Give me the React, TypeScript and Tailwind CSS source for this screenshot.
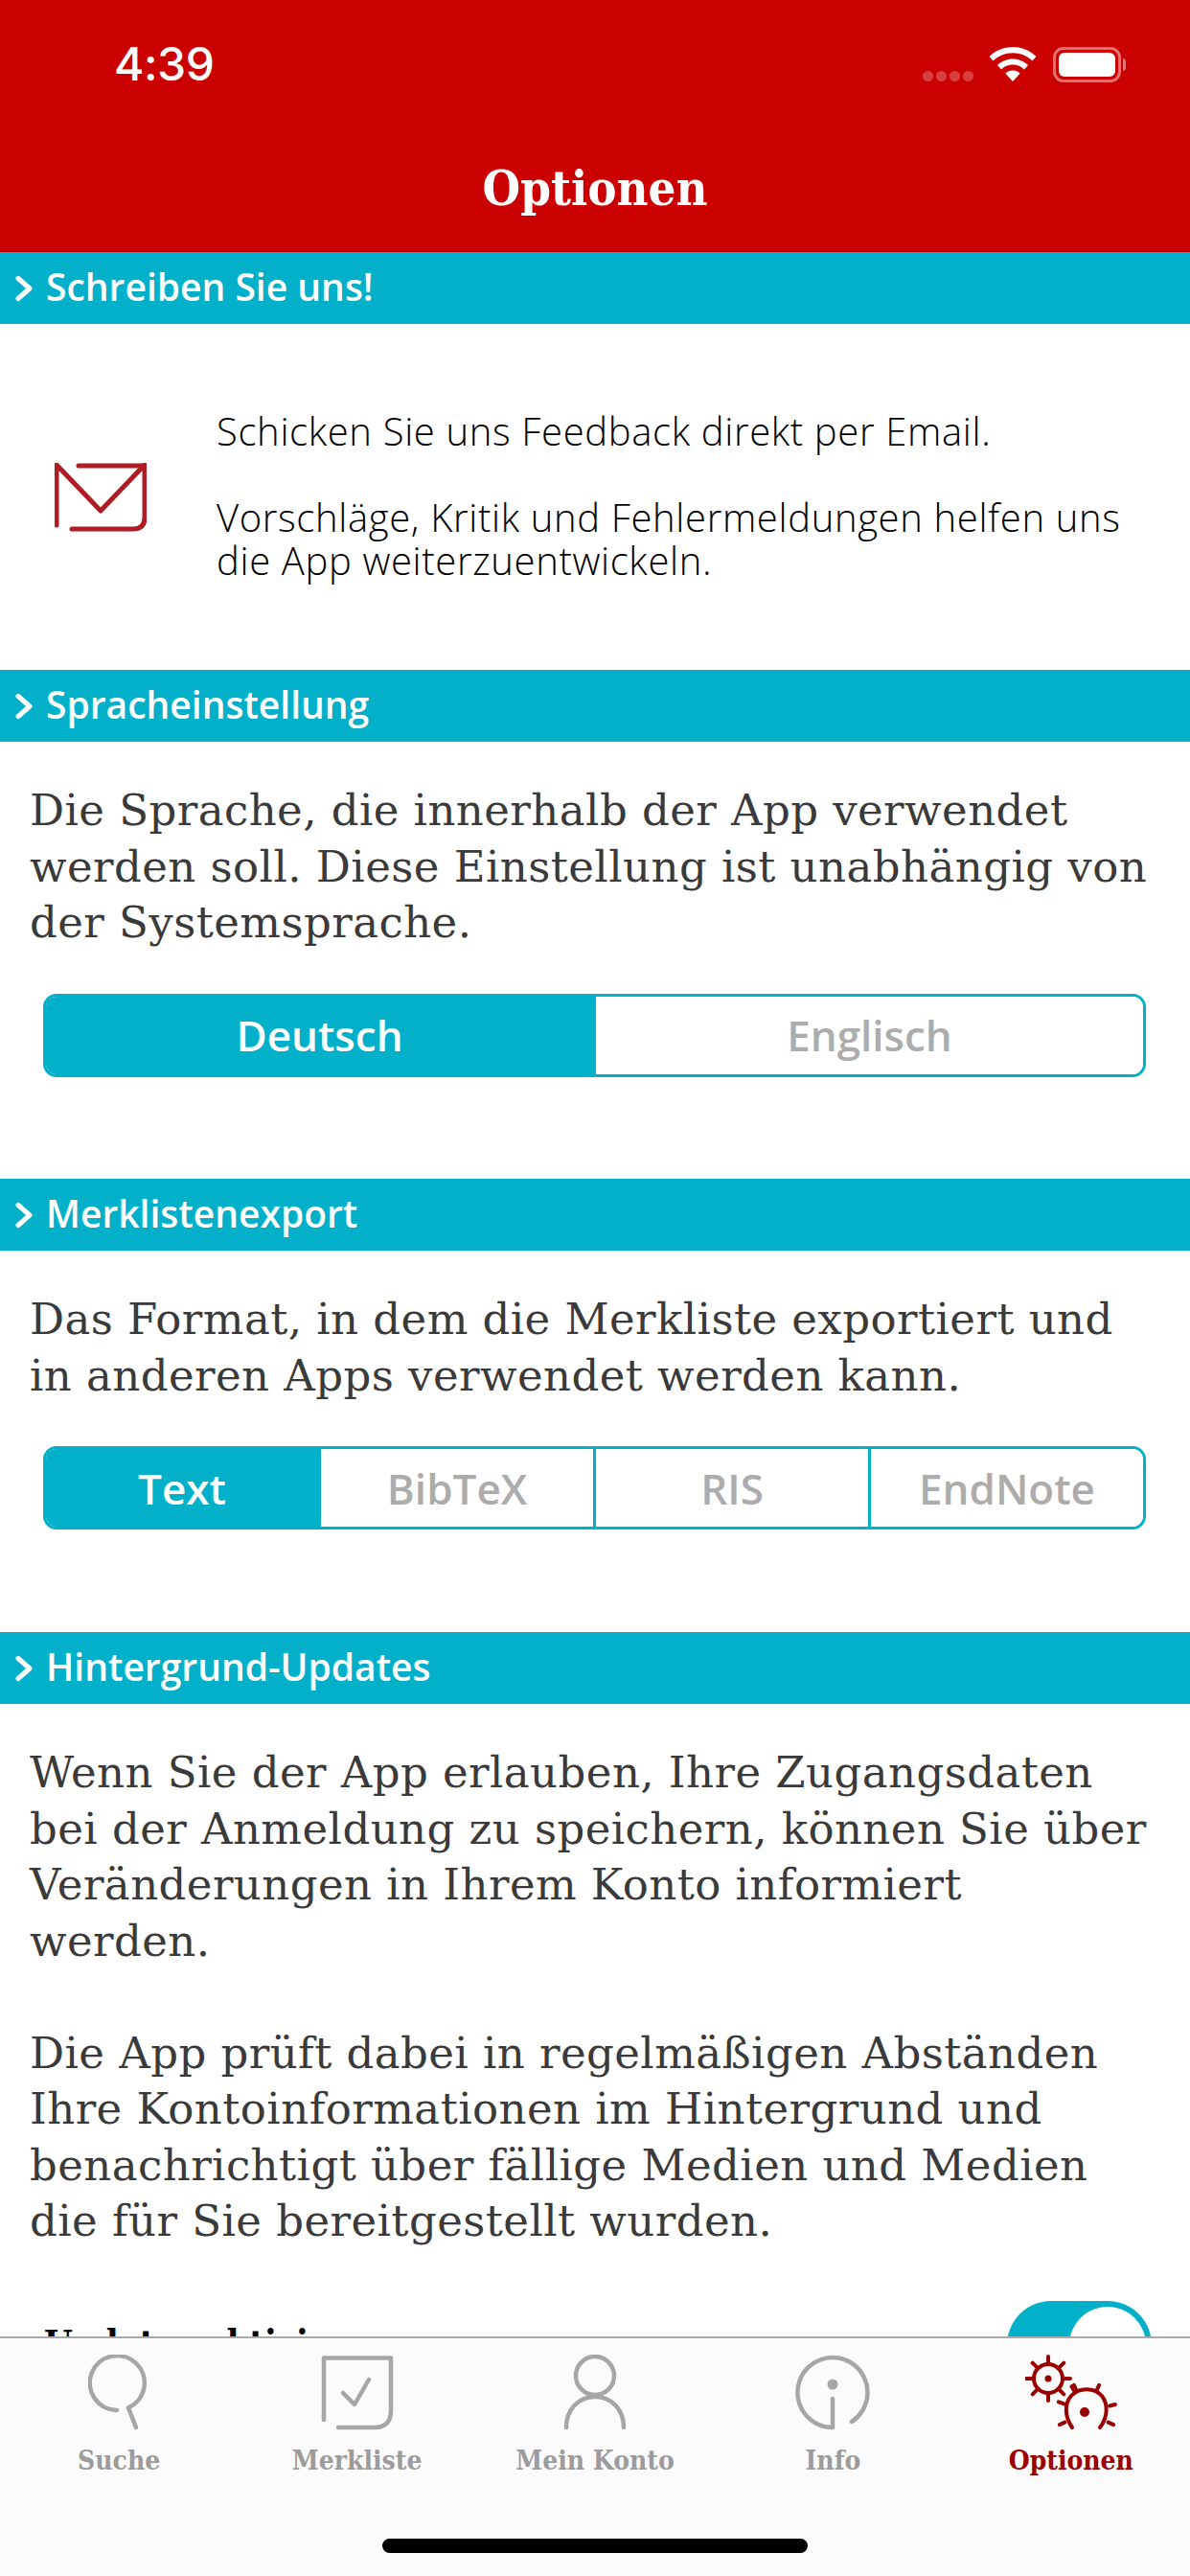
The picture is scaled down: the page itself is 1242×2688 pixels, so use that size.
const slab = "font-['DejaVu_Serif_Condensed','DejaVu_Serif',serif]";

function Chevron() {
  return (
    <svg width="18" height="28" viewBox="0 0 18 28" className="shrink-0" fill="none" stroke="#fff" strokeWidth="5" strokeLinecap="round" strokeLinejoin="round">
      <path d="M3 3.500 L15 14 L3 24.500" />
    </svg>
  );
}

function SectionBar({ title }: { title: string }) {
  return (
    <div className="h-[75px] bg-[#02b0ca] flex items-center pl-[16px] gap-[14px] shrink-0">
      <Chevron />
      <span className="font-['Open_Sans',sans-serif] font-semibold text-[39px] leading-none text-white mt-[-4px]">{title}</span>
    </div>
  );
}

function Body({ lines }: { lines: string[] }) {
  return (
    <div className="font-['DejaVu_Serif',serif] text-[45px] tracking-[0.45px] leading-[58.5px] text-[#3a3a3a] pl-[31px] whitespace-nowrap">
      {lines.map((l, i) => (
        <div key={i} className="h-[58.5px]">{l || " "}</div>
      ))}
    </div>
  );
}

function Segments({ items, active }: { items: string[]; active: number }) {
  return (
    <div className="ml-[45px] mr-[46px] h-[87px] border-[3px] border-[#02b0ca] rounded-[14px] flex overflow-hidden">
      {items.map((it, i) => (
        <div
          key={it}
          className={`flex-1 flex items-center justify-center font-['Open_Sans',sans-serif] font-semibold text-[44px] leading-none ${
            i === active ? "bg-[#02b0ca] text-white" : "bg-white text-[#acacac]"
          } ${i > 0 ? "border-l-[3px] border-[#02b0ca]" : ""}`}
        >
          {it}
        </div>
      ))}
    </div>
  );
}

function Wifi() {
  return (
    <svg width="50" height="36" viewBox="0 0 50 36" fill="#fff">
      <path d="M25 0C15.500 0 7 3.800 0.500 10L4.500 14.500C9.800 9.300 17 6.200 25 6.200C33 6.200 40.200 9.300 45.500 14.500L49.500 10C43 3.800 34.500 0 25 0Z" />
      <path d="M25 12.500C18.800 12.500 13.300 14.900 9 19L13 23.400C16.200 20.300 20.400 18.600 25 18.600C29.600 18.600 33.800 20.300 37 23.400L41 19C36.700 14.900 31.200 12.500 25 12.500Z" />
      <path d="M25 24.500C22 24.500 19.500 25.500 17.300 27.500L25 36L32.700 27.500C30.500 25.500 28 24.500 25 24.500Z" />
    </svg>
  );
}

function StatusBar() {
  return (
    <div className="h-[134px] flex items-center pl-[119px] pr-[67px]">
      <span className="font-['Inter',sans-serif] font-medium text-[48px] leading-none text-white tracking-[-0.5px]">4:39</span>
      <div className="ml-auto flex items-center">
        <div className="flex gap-[3px] mt-[24px] mr-[16px]">
          <span className="w-[11px] h-[11px] rounded-full bg-white/25" />
          <span className="w-[11px] h-[11px] rounded-full bg-white/25" />
          <span className="w-[11px] h-[11px] rounded-full bg-white/25" />
          <span className="w-[11px] h-[11px] rounded-full bg-white/25" />
        </div>
        <Wifi />
        <div className="ml-[17px] w-[71px] h-[37px] border-[3px] border-white/45 rounded-[11px] p-[3px]">
          <div className="w-full h-full bg-white rounded-[6px]" />
        </div>
        <div className="w-[3px] h-[13px] rounded-r-full bg-white/45 ml-[2px]" />
      </div>
    </div>
  );
}

function Mail() {
  return (
    <svg width="96" height="72" viewBox="0 0 96 72" fill="none" stroke="#b01c24" strokeWidth="5" strokeLinecap="round" strokeLinejoin="round">
      <path d="M25 3 H94 V57 Q94 69 82 69 H18" />
      <path d="M2 65 V2 L48 50 L94 2" />
    </svg>
  );
}

function IconSearch() {
  return (
    <svg width="64" height="80" viewBox="0 0 64 80" fill="none" stroke="#a6a6a6" strokeWidth="4.500" strokeLinecap="round">
      <path d="M30 58 A28.500 28.500 0 1 1 42 55.500" />
      <path d="M42 55.500 L50 76" />
    </svg>
  );
}

function IconList() {
  return (
    <svg width="76" height="80" viewBox="0 0 76 80" fill="none" stroke="#a6a6a6" strokeWidth="4.500" strokeLinecap="round" strokeLinejoin="round">
      <path d="M3 68 V3.500 H73 V58 Q73 76 56 76 H18" />
      <path d="M23 40 L35 52 L50 26" />
    </svg>
  );
}

function IconPerson() {
  return (
    <svg width="68" height="80" viewBox="0 0 68 80" fill="none" stroke="#a6a6a6" strokeWidth="4.500" strokeLinecap="round">
      <circle cx="34" cy="22" r="20" />
      <path d="M4 76 C4 58 16 44 34 44 C52 44 64 58 64 76" />
    </svg>
  );
}

function IconInfo() {
  return (
    <svg width="80" height="80" viewBox="0 0 80 80" fill="none" stroke="#a6a6a6" strokeWidth="4.500" strokeLinecap="round">
      <path d="M40 76 A36.500 36.500 0 1 1 60 70" />
      <path d="M40 46 V76" />
      <circle cx="40" cy="31" r="5.500" fill="#a6a6a6" stroke="none" />
    </svg>
  );
}

function teeth(cx: number, cy: number, r1: number, r2: number, angles: number[]) {
  return angles
    .map((a) => {
      const t = (a * Math.PI) / 180;
      return `M${(cx + r1 * Math.cos(t)).toFixed(1)} ${(cy + r1 * Math.sin(t)).toFixed(1)} L${(cx + r2 * Math.cos(t)).toFixed(1)} ${(cy + r2 * Math.sin(t)).toFixed(1)}`;
    })
    .join(" ");
}

function IconGears() {
  return (
    <svg width="96" height="80" viewBox="0 0 96 80" fill="none" stroke="#990000" strokeWidth="4" strokeLinecap="round">
      <circle cx="24" cy="25" r="15" />
      <path d={teeth(24, 25, 15, 23, [0, 45, 90, 135, 180, 225, 270, 315])} />
      <circle cx="24" cy="25" r="1.500" fill="#990000" />
      <path d="M49 76 C42 66 40 52 48 43 C56 34 72 34 80 43 C87 52 86 66 78 76" />
      <path d={teeth(64, 60, 25, 31, [-120, -65, -15, 25, 155, 200, 245])} />
      <circle cx="62" cy="60" r="3" fill="#990000" />
    </svg>
  );
}

function Tab({ label, icon, active }: { label: string; icon: React.ReactNode; active?: boolean }) {
  return (
    <div className="flex-1 flex flex-col items-center">
      <div className="h-[80px] flex items-center justify-center">{icon}</div>
      <span className={`${slab} mt-[15px] font-bold text-[28px] leading-[32px] ${active ? "text-[#990000]" : "text-[#9c9c9c]"}`}>{label}</span>
    </div>
  );
}

export default function App() {
  return (
    <div className="relative w-[1242px] h-[2688px] bg-white flex flex-col overflow-hidden">
      <div className="h-[263px] bg-[#cb0000] shrink-0 flex flex-col">
        <StatusBar />
        <div className={`${slab} text-center font-bold text-[50.500px] leading-none text-white mt-[38px]`}>Optionen</div>
      </div>

      <div className="flex-1 min-h-0 overflow-hidden">
        <SectionBar title="Schreiben Sie uns!" />
        <div className="h-[361px] flex items-center pl-[57px]">
          <div className="w-[169px] shrink-0"><Mail /></div>
          <div className="font-['Open_Sans',sans-serif] font-light text-[40px] tracking-[0.65px] leading-[45px] text-black mt-[-4px] whitespace-nowrap">
            <div>Schicken Sie uns Feedback direkt per Email.</div>
            <div className="h-[45px]" />
            <div>Vorschläge, Kritik und Fehlermeldungen helfen uns</div>
            <div>die App weiterzuentwickeln.</div>
          </div>
        </div>

        <SectionBar title="Spracheinstellung" />
        <div className="pt-[43px] h-[456px]">
          <Body lines={["Die Sprache, die innerhalb der App verwendet", "werden soll. Diese Einstellung ist unabhängig von", "der Systemsprache."]} />
          <div className="mt-[44px]"><Segments items={["Deutsch", "Englisch"]} active={0} /></div>
        </div>

        <SectionBar title="Merklistenexport" />
        <div className="pt-[43px] h-[398px]">
          <Body lines={["Das Format, in dem die Merkliste exportiert und", "in anderen Apps verwendet werden kann."]} />
          <div className="mt-[44px]"><Segments items={["Text", "BibTeX", "RIS", "EndNote"]} active={0} /></div>
        </div>

        <SectionBar title="Hintergrund-Updates" />
        <div className="pt-[43px]">
          <Body lines={["Wenn Sie der App erlauben, Ihre Zugangsdaten", "bei der Anmeldung zu speichern, können Sie über", "Veränderungen in Ihrem Konto informiert", "werden.", "", "Die App prüft dabei in regelmäßigen Abständen", "Ihre Kontoinformationen im Hintergrund und", "benachrichtigt über fällige Medien und Medien", "die für Sie bereitgestellt wurden."]} />
          <div className="flex items-start pl-[46px] pr-[40px] mt-[53px]">
            <span className={`${slab} font-bold text-[38px] leading-none text-black mt-[25px]`}>Updates aktivieren</span>
            <div className="ml-auto w-[151px] h-[92px] rounded-full bg-[#02b0ca] p-[6px] flex justify-end">
              <div className="w-[80px] h-[80px] rounded-full bg-white" />
            </div>
          </div>
        </div>
      </div>

      <div className="h-[250px] shrink-0 bg-[#fbfbfb] border-t-[2px] border-[#a9a9a9] flex items-start pt-[17px] relative z-10">
        <Tab label="Suche" icon={<IconSearch />} />
        <Tab label="Merkliste" icon={<IconList />} />
        <Tab label="Mein Konto" icon={<IconPerson />} />
        <Tab label="Info" icon={<IconInfo />} />
        <Tab label="Optionen" icon={<IconGears />} active />
      </div>
      <div className="absolute z-20 left-[399px] top-[2649px] w-[444px] h-[15px] rounded-full bg-black" />
    </div>
  );
}
